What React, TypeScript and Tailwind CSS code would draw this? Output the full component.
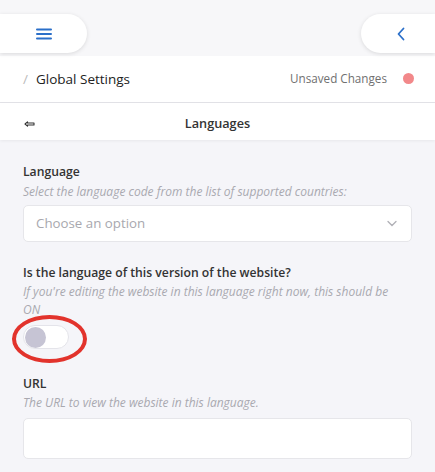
import React, { useState } from 'react';

const font = { fontFamily: '"Open Sans", "Noto Sans", sans-serif' };

export default function App() {
  const [isCurrent, setIsCurrent] = useState(false);
  const [url, setUrl] = useState('');

  return (
    <div className="w-[435px] h-[472px] overflow-hidden bg-[#f5f5f9] text-[#333]" style={font}>
      {/* top nav */}
      <div className="h-[56px] bg-[#f7f7f9] flex items-start justify-between pt-[14px]">
        <button className="w-[87px] h-[39px] bg-white rounded-r-full shadow-[0_1px_4px_rgba(0,0,0,0.12)] flex items-center justify-center">
          <svg width="16" height="12" viewBox="0 0 16 12">
            <path d="M1 1.5h14M1 6h14M1 10.5h14" stroke="#2a6fc9" strokeWidth="2" strokeLinecap="round" />
          </svg>
        </button>
        <button className="w-[74px] h-[39px] bg-white rounded-l-full shadow-[0_1px_4px_rgba(0,0,0,0.12)] flex items-center pl-[36px]">
          <svg width="8" height="14" viewBox="0 0 8 14">
            <path d="M6.5 1.5L1.5 7l5 5.5" stroke="#2a6fc9" strokeWidth="1.8" fill="none" strokeLinecap="round" strokeLinejoin="round" />
          </svg>
        </button>
      </div>

      {/* breadcrumb */}
      <div className="h-[47px] bg-white border-b border-[#e3e3e8] flex items-center justify-between pl-[23px] pr-[21px]">
        <div className="flex items-center gap-[8px] text-[13.5px]">
          <span className="text-[#bbb]">/</span>
          <span className="text-[#222]">Global Settings</span>
        </div>
        <div className="flex items-center gap-[16px]">
          <span className="text-[11.7px] text-[#707070]">Unsaved Changes</span>
          <span className="w-[11px] h-[11px] rounded-full bg-[#f2888a]" />
        </div>
      </div>

      {/* section header */}
      <div className="relative h-[37px] bg-white shadow-[0_1px_3px_rgba(0,0,0,0.06)] flex items-center justify-center pt-[5px]">
        <svg width="11" height="6" viewBox="0 0 11 6" className="absolute left-[24px] top-[18px]">
          <path d="M1 3L3.5 0.8V2H10V4H3.5V5.2Z" stroke="#333" strokeWidth="1.1" fill="none" strokeLinejoin="round" />
        </svg>
        <span className="text-[12.7px] font-semibold text-[#333]">Languages</span>
      </div>

      {/* form */}
      <div className="px-[23px] pt-[22px]">
        <div className="text-[12.2px] font-semibold text-[#333] leading-[20px]">Language</div>
        <div className="text-[12px] italic text-[#a9a9b0] leading-[17px] mt-[1px]">
          Select the language code from the list of supported countries:
        </div>
        <div className="mt-[5px] h-[37px] bg-white border border-[#e6e6ea] rounded-[5px] flex items-center justify-between pl-[12px] pr-[14px]">
          <span className="text-[13.3px] text-[#a8a8ae]">Choose an option</span>
          <svg width="10" height="7" viewBox="0 0 10 7">
            <path d="M1 1.5L5 5.5l4-4" stroke="#b0b0b6" strokeWidth="1.3" fill="none" strokeLinecap="round" />
          </svg>
        </div>

        <div className="mt-[21px] text-[12.2px] font-semibold text-[#333] leading-[20px]">
          Is the language of this version of the website?
        </div>
        <div className="text-[12px] italic text-[#a9a9b0] leading-[18px] pr-[20px]">
          If you're editing the website in this language right now, this should be ON
        </div>
        <div className="relative mt-[6px] h-[24px] w-[46px]">
          <button
            onClick={() => setIsCurrent(!isCurrent)}
            className="w-[46px] h-[24px] rounded-full bg-white border border-[#e4e4ea] flex items-center px-[1px]"
          >
            <span className={isCurrent ? 'ml-auto w-[21px] h-[21px] rounded-full bg-[#2a6fc9]' : 'w-[21px] h-[21px] rounded-full bg-[#c6c4d4]'} />
          </button>
          <div className="absolute left-[-11px] top-[-10px] w-[75px] h-[48px] rounded-[50%] border-[4px] border-[#e2332c] pointer-events-none" />
        </div>

        <div className="mt-[25px] text-[12.2px] font-semibold text-[#333] leading-[20px]">URL</div>
        <div className="text-[12px] italic text-[#a9a9b0] leading-[17px]">
          The URL to view the website in this language.
        </div>
        <input
          value={url}
          onChange={(e) => setUrl(e.target.value)}
          className="mt-[7px] w-full h-[41px] bg-white border border-[#e6e6ea] rounded-[5px] px-[12px] text-[14px] outline-none"
        />
      </div>
    </div>
  );
}
